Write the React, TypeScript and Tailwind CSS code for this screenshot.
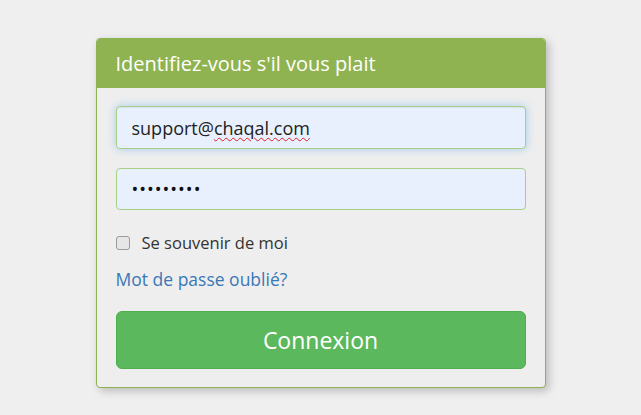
export default function App() {
  return (
    <div className="min-h-[415px] bg-[#efefef] pt-[38px]" style={{ fontFamily: '"Open Sans", "Noto Sans", sans-serif' }}>
      <div className="mx-auto w-[450px] overflow-hidden rounded-[4px] border border-[#8db251] bg-[#eeeeee] shadow-[3px_3px_8px_rgba(0,0,0,0.22)]">
        <div className="flex h-[49px] items-center bg-[#8fb351] px-[19px] text-[20px] text-white">
          Identifiez-vous s'il vous plait
        </div>
        <form className="flex flex-col px-[19px] pt-[18px] pb-[18px]">
          <div className="relative">
            <input
              type="email"
              defaultValue="support@chaqal.com"
              className="h-[43px] w-full rounded-[4px] border border-[#a8cf86] bg-[#e8f0fe] pl-[15px] text-[18px] text-[#222] shadow-[inset_0_1px_1px_rgba(0,0,0,0.075),0_0_8px_rgba(102,175,233,0.55)] outline-none"
            />
            <span className="pointer-events-none absolute left-[16px] top-0 flex h-[43px] items-center text-[18px] text-transparent">
              support@<span className="underline decoration-[#e02020] decoration-wavy decoration-1 underline-offset-[3px]">chaqal.com</span>
            </span>
          </div>
          <input
            type="password"
            defaultValue="secretpwd"
            className="mt-[19px] h-[42px] w-full rounded-[4px] border border-[#a8cf86] bg-[#e8f0fe] pl-[15px] text-[18px] tracking-[1px] text-[#111] outline-none"
          />
          <label className="mt-[21px] flex items-center gap-[12px] text-[16.5px] text-[#333]">
            <span className="h-[14px] w-[14px] rounded-[3px] border border-[#9a9a9a] bg-[#e6e6e6]" />
            Se souvenir de moi
          </label>
          <a href="#" className="mt-[10px] text-[17.5px] text-[#3a78b5]">
            Mot de passe oublié?
          </a>
          <button
            type="button"
            className="mt-[19px] h-[58px] w-full rounded-[6px] border border-[#4cae4c] bg-[#5cb85c] text-[23px] text-white"
          >
            Connexion
          </button>
        </form>
      </div>
    </div>
  );
}
